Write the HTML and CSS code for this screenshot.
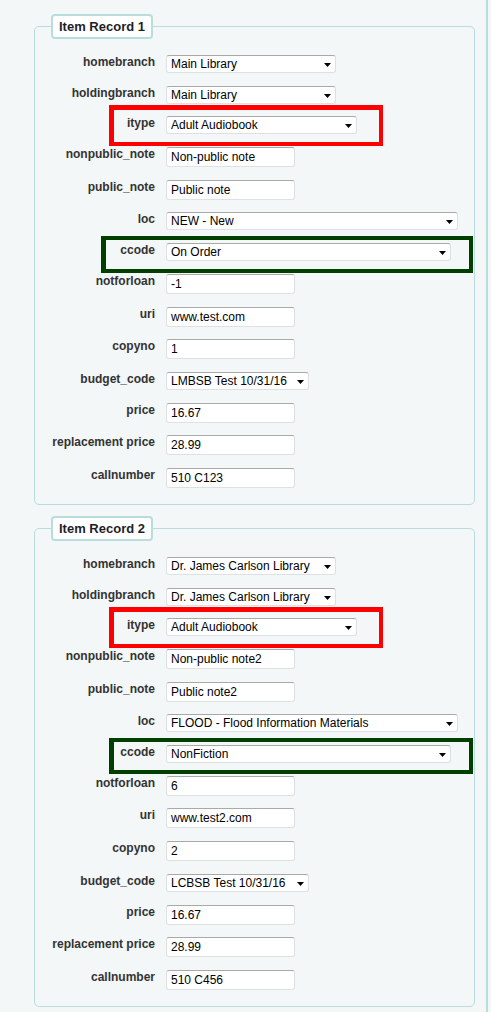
FILE: index.html
```html
<!DOCTYPE html>
<html>
<head>
<meta charset="utf-8">
<link rel="stylesheet" href="styles.css">
</head>
<body>
<div class="page">
  <fieldset class="record">
    <legend class="legend">Item Record 1</legend>
    <div class="rows">
      <div class="row"><span class="lbl">homebranch</span><span class="ctl sel w170"><span>Main Library</span><svg class="arrow" width="7" height="4" viewBox="0 0 7 4"><polygon points="0,0 7,0 3.5,4"/></svg></span></div>
      <div class="row"><span class="lbl">holdingbranch</span><span class="ctl sel w170"><span>Main Library</span><svg class="arrow" width="7" height="4" viewBox="0 0 7 4"><polygon points="0,0 7,0 3.5,4"/></svg></span></div>
      <div class="row"><span class="lbl">itype</span><span class="ctl sel w191"><span>Adult Audiobook</span><svg class="arrow" width="7" height="4" viewBox="0 0 7 4"><polygon points="0,0 7,0 3.5,4"/></svg></span><span class="mark red"></span></div>
      <div class="row"><span class="lbl">nonpublic_note</span><span class="ctl inp">Non-public note</span></div>
      <div class="row"><span class="lbl">public_note</span><span class="ctl inp">Public note</span></div>
      <div class="row"><span class="lbl">loc</span><span class="ctl sel w292"><span>NEW - New</span><svg class="arrow" width="7" height="4" viewBox="0 0 7 4"><polygon points="0,0 7,0 3.5,4"/></svg></span></div>
      <div class="row"><span class="lbl">ccode</span><span class="ctl sel w285"><span>On Order</span><svg class="arrow" width="7" height="4" viewBox="0 0 7 4"><polygon points="0,0 7,0 3.5,4"/></svg></span><span class="mark green green-a"></span></div>
      <div class="row"><span class="lbl">notforloan</span><span class="ctl inp">-1</span></div>
      <div class="row"><span class="lbl">uri</span><span class="ctl inp">www.test.com</span></div>
      <div class="row"><span class="lbl">copyno</span><span class="ctl inp">1</span></div>
      <div class="row"><span class="lbl">budget_code</span><span class="ctl sel w143"><span>LMBSB Test 10/31/16</span><svg class="arrow" width="7" height="4" viewBox="0 0 7 4"><polygon points="0,0 7,0 3.5,4"/></svg></span></div>
      <div class="row"><span class="lbl">price</span><span class="ctl inp">16.67</span></div>
      <div class="row"><span class="lbl">replacement price</span><span class="ctl inp">28.99</span></div>
      <div class="row"><span class="lbl">callnumber</span><span class="ctl inp">510 C123</span></div>
    </div>
  </fieldset>

  <fieldset class="record second">
    <legend class="legend">Item Record 2</legend>
    <div class="rows">
      <div class="row"><span class="lbl">homebranch</span><span class="ctl sel w170"><span>Dr. James Carlson Library</span><svg class="arrow" width="7" height="4" viewBox="0 0 7 4"><polygon points="0,0 7,0 3.5,4"/></svg></span></div>
      <div class="row"><span class="lbl">holdingbranch</span><span class="ctl sel w170"><span>Dr. James Carlson Library</span><svg class="arrow" width="7" height="4" viewBox="0 0 7 4"><polygon points="0,0 7,0 3.5,4"/></svg></span></div>
      <div class="row"><span class="lbl">itype</span><span class="ctl sel w191"><span>Adult Audiobook</span><svg class="arrow" width="7" height="4" viewBox="0 0 7 4"><polygon points="0,0 7,0 3.5,4"/></svg></span><span class="mark red"></span></div>
      <div class="row"><span class="lbl">nonpublic_note</span><span class="ctl inp">Non-public note2</span></div>
      <div class="row"><span class="lbl">public_note</span><span class="ctl inp">Public note2</span></div>
      <div class="row"><span class="lbl">loc</span><span class="ctl sel w292"><span>FLOOD - Flood Information Materials</span><svg class="arrow" width="7" height="4" viewBox="0 0 7 4"><polygon points="0,0 7,0 3.5,4"/></svg></span></div>
      <div class="row"><span class="lbl">ccode</span><span class="ctl sel w285"><span>NonFiction</span><svg class="arrow" width="7" height="4" viewBox="0 0 7 4"><polygon points="0,0 7,0 3.5,4"/></svg></span><span class="mark green green-b"></span></div>
      <div class="row"><span class="lbl">notforloan</span><span class="ctl inp">6</span></div>
      <div class="row"><span class="lbl">uri</span><span class="ctl inp">www.test2.com</span></div>
      <div class="row"><span class="lbl">copyno</span><span class="ctl inp">2</span></div>
      <div class="row"><span class="lbl">budget_code</span><span class="ctl sel w143"><span>LCBSB Test 10/31/16</span><svg class="arrow" width="7" height="4" viewBox="0 0 7 4"><polygon points="0,0 7,0 3.5,4"/></svg></span></div>
      <div class="row"><span class="lbl">price</span><span class="ctl inp">16.67</span></div>
      <div class="row"><span class="lbl">replacement price</span><span class="ctl inp">28.99</span></div>
      <div class="row"><span class="lbl">callnumber</span><span class="ctl inp">510 C456</span></div>
    </div>
  </fieldset>
</div>
</body>
</html>
```

FILE: styles.css
```css
html, body {
  margin: 0;
  padding: 0;
}

body {
  background: #f3f7f8;
  font-family: "Liberation Sans", Arial, sans-serif;
}

.page {
  box-sizing: border-box;
  width: 488px;
  height: 1012px;
  padding-top: 14px;
  border-right: 2px solid #b9dcdc;
  overflow: hidden;
}

.record {
  box-sizing: border-box;
  width: 441px;
  margin: 0 0 0 34px;
  padding: 16px 0 16px 16px;
  border: 1px solid #b9dcdc;
  border-radius: 5px;
  min-width: 0;
}

.record.second {
  margin-top: 11px;
}

.legend {
  box-sizing: border-box;
  height: 25px;
  padding: 0 6px;
  border: 2px solid #b9dcdc;
  border-radius: 4px;
  background: #ffffff;
  font-size: 13px;
  font-weight: bold;
  line-height: 21px;
  color: #1e1e28;
}

.rows {
  display: flex;
  flex-direction: column;
  gap: 12.7px;
}

.row {
  display: flex;
  align-items: flex-start;
  position: relative;
}

.lbl {
  flex: none;
  width: 104px;
  margin-right: 11px;
  text-align: right;
  white-space: nowrap;
  font-size: 12px;
  font-weight: bold;
  color: #333333;
}

.ctl {
  box-sizing: border-box;
  display: flex;
  align-items: center;
  flex: none;
  background: #ffffff;
  border: 1px solid #dde1e3;
  border-top-color: #a9a9a9;
  border-radius: 3px;
  padding-left: 4px;
  font-size: 12px;
  color: #000000;
  white-space: nowrap;
  overflow: hidden;
}

.inp {
  width: 129px;
  height: 20px;
}

.sel {
  height: 18px;
  justify-content: space-between;
  padding-right: 4px;
}

.w170 { width: 170px; }
.w191 { width: 191px; }
.w292 { width: 292px; }
.w285 { width: 285px; }
.w143 { width: 143px; }

.arrow {
  flex: none;
  margin-top: 2px;
  fill: #000000;
}

.mark {
  position: absolute;
  box-sizing: border-box;
  pointer-events: none;
}

.red {
  left: 58px;
  top: -11px;
  width: 274px;
  height: 41px;
  border: 4px solid #ff0000;
  border-left-width: 5px;
  border-top-width: 5px;
}

.green {
  border: 4px solid #003f00;
  border-left-width: 5px;
  top: -7px;
}

.green-a {
  left: 50px;
  width: 372px;
  height: 37px;
}

.green-b {
  left: 58px;
  width: 364px;
  height: 36px;
}
```
